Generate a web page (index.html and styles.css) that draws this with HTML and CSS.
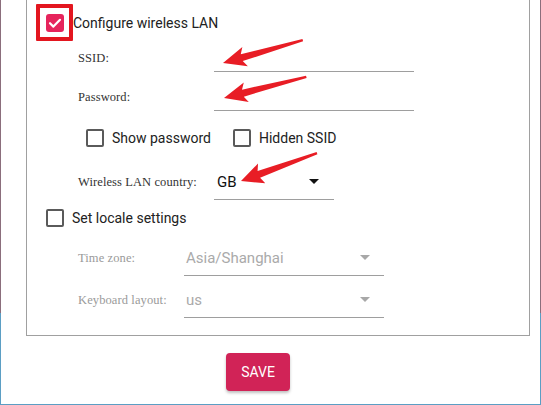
FILE: index.html
```html
<!DOCTYPE html>
<html>
<head>
<meta charset="utf-8">
<link rel="stylesheet" href="styles.css">
</head>
<body>
<div class="frame">
  <div class="panel">
    <div class="check-row main-check">
      <span class="cb cb-on"><svg width="18" height="18" viewBox="0 0 18 18"><polyline points="4,9.2 7.4,12.6 14,5.8" fill="none" stroke="#fff" stroke-width="2.2" stroke-linecap="round" stroke-linejoin="round"/></svg></span>
      <span class="cb-label">Configure wireless LAN</span>
    </div>

    <div class="wifi">
      <div class="field f-ssid">
        <span class="lbl lbl-wide">SSID:</span>
        <div class="input"></div>
      </div>
      <div class="field f-pass">
        <span class="lbl lbl-wide">Password:</span>
        <div class="input"></div>
      </div>
      <div class="check-row sub-checks">
        <span class="cb"></span>
        <span class="cb-label">Show password</span>
        <span class="cb cb-second"></span>
        <span class="cb-label">Hidden SSID</span>
      </div>
      <div class="field f-country">
        <span class="lbl lbl-wide">Wireless LAN country:</span>
        <div class="select select-short"><span class="sel-value">GB</span><span class="tri"></span></div>
      </div>
    </div>

    <div class="check-row locale-check">
      <span class="cb"></span>
      <span class="cb-label">Set locale settings</span>
    </div>

    <div class="locale">
      <div class="field f-tz">
        <span class="lbl lbl-mid">Time zone:</span>
        <div class="select disabled"><span class="sel-value">Asia/Shanghai</span><span class="tri"></span></div>
      </div>
      <div class="field f-kb">
        <span class="lbl lbl-mid">Keyboard layout:</span>
        <div class="select disabled"><span class="sel-value">us</span><span class="tri"></span></div>
      </div>
    </div>
  </div>

  <button class="save">SAVE</button>

  <div class="mark-box"></div>
  <svg class="arrows" width="541" height="405" viewBox="0 0 541 405">
    <g transform="translate(223,63) rotate(-16)">
      <polygon points="0,0 23,-10 19.5,-3.6 83,-1.2 83,1.2 19.5,3.6 23,10" fill="#e81d25"/>
    </g>
    <g transform="translate(224,98) rotate(-14.4)">
      <polygon points="0,0 23,-10 19.5,-3.6 85,-1.2 85,1.2 19.5,3.6 23,10" fill="#e81d25"/>
    </g>
    <g transform="translate(241,181) rotate(-20.2)">
      <polygon points="0,0 22,-10.5 19,-3.6 81,-1.2 81,1.2 19,3.6 22,10.5" fill="#e81d25"/>
    </g>
  </svg>
</div>
</body>
</html>
```

FILE: styles.css
```css
* { box-sizing: border-box; }
html, body { margin: 0; padding: 0; background: #fff; }
body { font-family: Roboto, "Liberation Sans", Arial, sans-serif; color: #222; }

.frame {
  position: relative;
  width: 541px;
  height: 405px;
  border-style: solid;
  border-width: 0 1px 1px 1px;
  border-image: linear-gradient(to bottom, #8b6e7c 313px, #5b9ec4 313px) 1;
  background: #fff;
  overflow: hidden;
}

.panel {
  margin-left: 25px;
  width: 504px;
  border: 1px solid #a0a0a0;
  border-top: none;
  padding: 14px 0 17px 19px;
}

.check-row {
  display: flex;
  align-items: center;
  height: 18px;
}

.cb {
  width: 18px;
  height: 18px;
  border: 2px solid #5a5a5a;
  border-radius: 2px;
  flex: none;
  display: flex;
}
.cb-on {
  border: none;
  background: #e6245c;
  border-radius: 3px;
}
.cb-label {
  margin-left: 8px;
  font-size: 14px;
  color: #222;
  line-height: 18px;
}
.main-check .cb-label { margin-left: 9px; }
.cb-second { margin-left: 22px; }

.wifi, .locale { margin-left: 32px; }

.field {
  display: flex;
  align-items: center;
}
.lbl {
  font-family: "Liberation Serif", "Times New Roman", serif;
  font-size: 12.5px;
  letter-spacing: 0.1px;
  color: #333;
  flex: none;
  white-space: nowrap;
}
.lbl-wide { width: 136px; }
.lbl-mid { width: 106px; }

.input {
  width: 200px;
  height: 27px;
  border-bottom: 1px solid #9e9e9e;
}

.f-ssid { margin-top: 13px; }
.f-pass { margin-top: 12px; }
.sub-checks { margin-top: 18px; padding-left: 8px; }
.f-country { margin-top: 18px; }
.locale-check { margin-top: 9px; }
.f-tz { margin-top: 14px; }
.f-kb { margin-top: 7px; }

.select {
  width: 200px;
  height: 35px;
  border-bottom: 1px solid #9e9e9e;
  display: flex;
  align-items: center;
  padding: 0 14px 1px 3px;
  font-size: 15px;
  color: #111;
}
.select-short { width: 120px; padding-right: 15px; }
.select.disabled { color: #aaa; padding-left: 2px; }
.sel-value { line-height: 18px; }
.tri {
  margin-left: auto;
  width: 0;
  height: 0;
  border-left: 5px solid transparent;
  border-right: 5px solid transparent;
  border-top: 5px solid #111;
}
.select.disabled .tri { border-top-color: #a8a8a8; }
.locale .lbl { color: #9a9a9a; }
.locale .select { color: #aaa; }

.save {
  display: block;
  margin: 17px 0 0 225px;
  width: 64px;
  height: 38px;
  border: none;
  border-radius: 4px;
  background: #d12357;
  color: #fff;
  font-family: Roboto, "Liberation Sans", Arial, sans-serif;
  font-size: 14px;
  box-shadow: 0 2px 3px rgba(0,0,0,0.25);
  padding: 0;
}

.mark-box {
  position: absolute;
  left: 35px;
  top: 4px;
  width: 37px;
  height: 37px;
  border: 4px solid #e3161f;
  border-radius: 1px;
}
.arrows {
  position: absolute;
  left: -1px;
  top: 0;
}
```
